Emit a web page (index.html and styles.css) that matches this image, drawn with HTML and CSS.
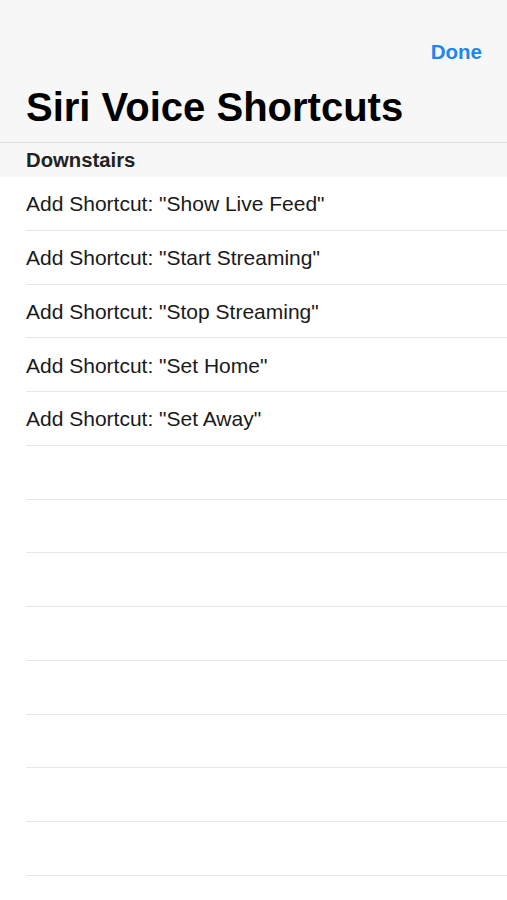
FILE: index.html
```html
<!DOCTYPE html>
<html>
<head>
<meta charset="utf-8">
<link rel="stylesheet" href="styles.css">
</head>
<body>
<div class="screen">
  <header class="navbar">
    <div class="nav-top">
      <span class="done">Done</span>
    </div>
    <h1 class="title">Siri Voice Shortcuts</h1>
  </header>
  <div class="section-header">Downstairs</div>
  <ul class="list">
    <li class="row">Add Shortcut: "Show Live Feed"</li>
    <li class="row">Add Shortcut: "Start Streaming"</li>
    <li class="row">Add Shortcut: "Stop Streaming"</li>
    <li class="row">Add Shortcut: "Set Home"</li>
    <li class="row">Add Shortcut: "Set Away"</li>
    <li class="row"></li>
    <li class="row"></li>
    <li class="row"></li>
    <li class="row"></li>
    <li class="row"></li>
    <li class="row"></li>
    <li class="row"></li>
    <li class="row"></li>
  </ul>
</div>
</body>
</html>
```

FILE: styles.css
```css
html, body {
  margin: 0;
  padding: 0;
  background: #ffffff;
}
body {
  font-family: "Liberation Sans", Arial, sans-serif;
  color: #111;
}
.screen {
  width: 507px;
  height: 900px;
  overflow: hidden;
  background: #fff;
}
.navbar {
  background: #f7f7f7;
  height: 143px;
  box-sizing: border-box;
  border-bottom: 1px solid #dcdcdc;
  display: flex;
  flex-direction: column;
}
.nav-top {
  height: 84px;
  display: flex;
  justify-content: flex-end;
  align-items: flex-start;
  padding: 40px 25px 0 0;
  box-sizing: border-box;
}
.done {
  color: #1c86f2;
  font-size: 20.5px;
  font-weight: bold;
}
.title {
  margin: 0;
  padding-left: 26px;
  font-size: 40px;
  line-height: 46px;
  font-weight: bold;
  color: #000;
}
.section-header {
  background: #f7f7f7;
  height: 34px;
  box-sizing: border-box;
  padding: 6px 0 0 26px;
  font-size: 20.3px;
  font-weight: bold;
  color: #222;
}
.list {
  list-style: none;
  margin: 0;
  padding: 0 0 0 26px;
}
.row {
  height: 53.75px;
  box-sizing: border-box;
  border-bottom: 1px solid #e6e6e6;
  display: flex;
  align-items: center;
  padding-top: 2px;
  font-size: 21px;
  color: #1a1a1a;
}
```
